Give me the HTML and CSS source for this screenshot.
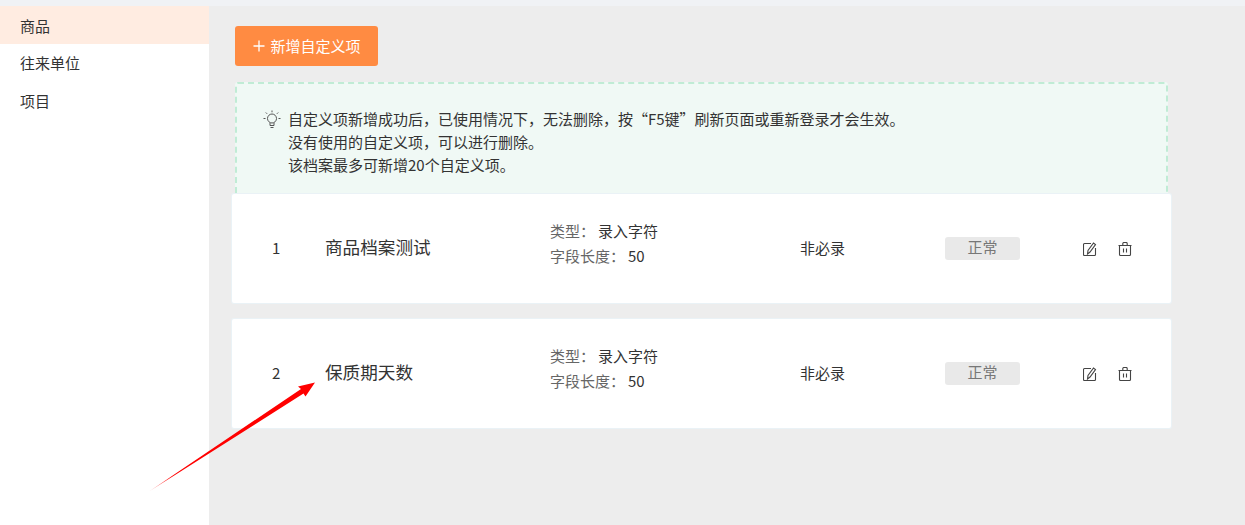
FILE: index.html
```html
<!DOCTYPE html>
<html lang="zh-CN">
<head>
<meta charset="utf-8">
<title>自定义项</title>
<link rel="stylesheet" href="styles.css">
</head>
<body>
<div class="topbar"></div>
<div class="layout">
  <nav class="sidebar">
    <div class="nav-item nudge active">商品</div>
    <div class="nav-item">往来单位</div>
    <div class="nav-item nudge">项目</div>
  </nav>
  <main class="content">
    <button class="add-btn"><svg class="plus" viewBox="0 0 12 12" width="12" height="12"><path d="M6 0.5V11.5M0.5 6H11.5" stroke="#fff" stroke-width="1.3" fill="none"/></svg>新增自定义项</button>
    <section class="notice">
      <svg class="bulb" viewBox="0 0 18 20" width="18" height="20" fill="none" stroke="#555" stroke-width="1">
        <circle cx="9" cy="8.5" r="4.5"/>
        <path d="M7 13v2.5h4V13M7.5 17.5h3M9 0.5v1.8M2.8 2.5l1.3 1.3M15.2 2.5l-1.3 1.3M0.5 8.5h2M15.5 8.5h2"/>
      </svg>
      <div class="notice-text">
        <p>自定义项新增成功后，已使用情况下，无法删除，按“F5键”刷新页面或重新登录才会生效。</p>
        <p>没有使用的自定义项，可以进行删除。</p>
        <p>该档案最多可新增20个自定义项。</p>
      </div>
    </section>
    <div class="rows">
      <article class="row">
        <div class="idx">1</div>
        <div class="name">商品档案测试</div>
        <div class="meta">
          <div><span class="label">类型：</span>录入字符</div>
          <div><span class="label">字段长度：</span>50</div>
        </div>
        <div class="req">非必录</div>
        <div class="status">正常</div>
        <div class="actions">
          <svg viewBox="0 0 14 14" width="14" height="14" fill="none" stroke="#444" stroke-width="1.1"><path d="M8 1.5H1.5a1 1 0 0 0-1 1V12.5a1 1 0 0 0 1 1h10a1 1 0 0 0 1-1V6"/><path d="M4.5 12L5 8.5 10.5 1l2 1.5L7 10z"/></svg>
          <svg viewBox="0 0 14 14" width="14" height="14" fill="none" stroke="#444" stroke-width="1.1"><path d="M0.5 3.5h13M1.5 3.5v9a1 1 0 0 0 1 1h9a1 1 0 0 0 1-1v-9M4.8 3.5V1.5a1 1 0 0 1 1-1h2.4a1 1 0 0 1 1 1v2M5.5 6.5v4M8.5 6.5v4"/></svg>
        </div>
      </article>
      <article class="row">
        <div class="idx">2</div>
        <div class="name">保质期天数</div>
        <div class="meta">
          <div><span class="label">类型：</span>录入字符</div>
          <div><span class="label">字段长度：</span>50</div>
        </div>
        <div class="req">非必录</div>
        <div class="status">正常</div>
        <div class="actions">
          <svg viewBox="0 0 14 14" width="14" height="14" fill="none" stroke="#444" stroke-width="1.1"><path d="M8 1.5H1.5a1 1 0 0 0-1 1V12.5a1 1 0 0 0 1 1h10a1 1 0 0 0 1-1V6"/><path d="M4.5 12L5 8.5 10.5 1l2 1.5L7 10z"/></svg>
          <svg viewBox="0 0 14 14" width="14" height="14" fill="none" stroke="#444" stroke-width="1.1"><path d="M0.5 3.5h13M1.5 3.5v9a1 1 0 0 0 1 1h9a1 1 0 0 0 1-1v-9M4.8 3.5V1.5a1 1 0 0 1 1-1h2.4a1 1 0 0 1 1 1v2M5.5 6.5v4M8.5 6.5v4"/></svg>
        </div>
      </article>
    </div>
  </main>
</div>
<svg class="arrow" viewBox="0 0 1245 525" width="1245" height="525">
  <defs><linearGradient id="fade" gradientUnits="userSpaceOnUse" x1="150" y1="491" x2="172" y2="476"><stop offset="0" stop-color="#ff0000" stop-opacity="0.35"/><stop offset="1" stop-color="#ff0000"/></linearGradient></defs>
  <path d="M149 491.5 L301 389 L298 386.5 L315 382.5 L305.5 396.5 L303.5 393.5 Z" fill="url(#fade)"/>
</svg>
</body>
</html>
```
FILE: styles.css
```css
* { box-sizing: border-box; }
html, body { margin: 0; padding: 0; height: 525px; overflow: hidden; }
body {
  background: #ededed;
  color: #333;
  font-family: "Noto Sans CJK SC", "Liberation Sans", sans-serif;
  font-size: 15px;
  position: relative;
}
.topbar { height: 6px; background: #f0f2f5; }
.layout { display: flex; height: 519px; }
.sidebar { width: 209px; background: #fff; flex: none; }
.nav-item { height: 38px; line-height: 38px; padding-left: 20px; color: #333; }
.nav-item:nth-child(2) { height: 37px; line-height: 37px; }
.nav-item.nudge { line-height: 40px; }
.nav-item.active { background: #ffece1; }
.content { flex: 1; padding: 20px 0 0 26px; }
.add-btn {
  display: flex; align-items: center; justify-content: center; gap: 5px;
  width: 143px; height: 40px; border: none; border-radius: 3px;
  background: #ff8b42; color: #fff; font: inherit; padding: 0 0 2px 1px;
}
.plus { flex: none; margin-top: 2px; }
.notice {
  width: 933px; height: 112px; margin-top: 16px;
  display: flex; gap: 7px; padding: 23px 0 0 26px;
  background: #f0f9f5;
  border: 2px dashed #c0ecd5; border-bottom: none;
  border-radius: 3px 3px 0 0;
}
.bulb { flex: none; margin-top: 3px; }
.notice-text p { margin: 0; line-height: 23px; color: #333; white-space: nowrap; }
.rows { margin: 0 0 0 -3px; width: 939px; display: flex; flex-direction: column; gap: 16px; }
.row {
  height: 109px; background: #fff; border-radius: 2px;
  box-shadow: 0 0 0 1px #eaf2f6;
  display: flex; align-items: center;
}
.idx { width: 93px; flex: none; padding: 0 0 2px 40px; color: #333; }
.name { width: 225px; flex: none; padding-bottom: 4px; font-size: 17.6px; color: #333; }
.meta { width: 250px; flex: none; padding-bottom: 11px; line-height: 25px; color: #333; }
.label { color: #666; margin-right: 3px; }
.req { width: 145px; flex: none; padding-bottom: 2px; }
.status {
  width: 75px; height: 23px; flex: none; border-radius: 3px;
  background: #e9e9e9; color: #777; text-align: center; line-height: 20px;
}
.actions { display: flex; gap: 21px; margin-left: 63px; }
.arrow { position: absolute; left: 0; top: 0; pointer-events: none; }
```
